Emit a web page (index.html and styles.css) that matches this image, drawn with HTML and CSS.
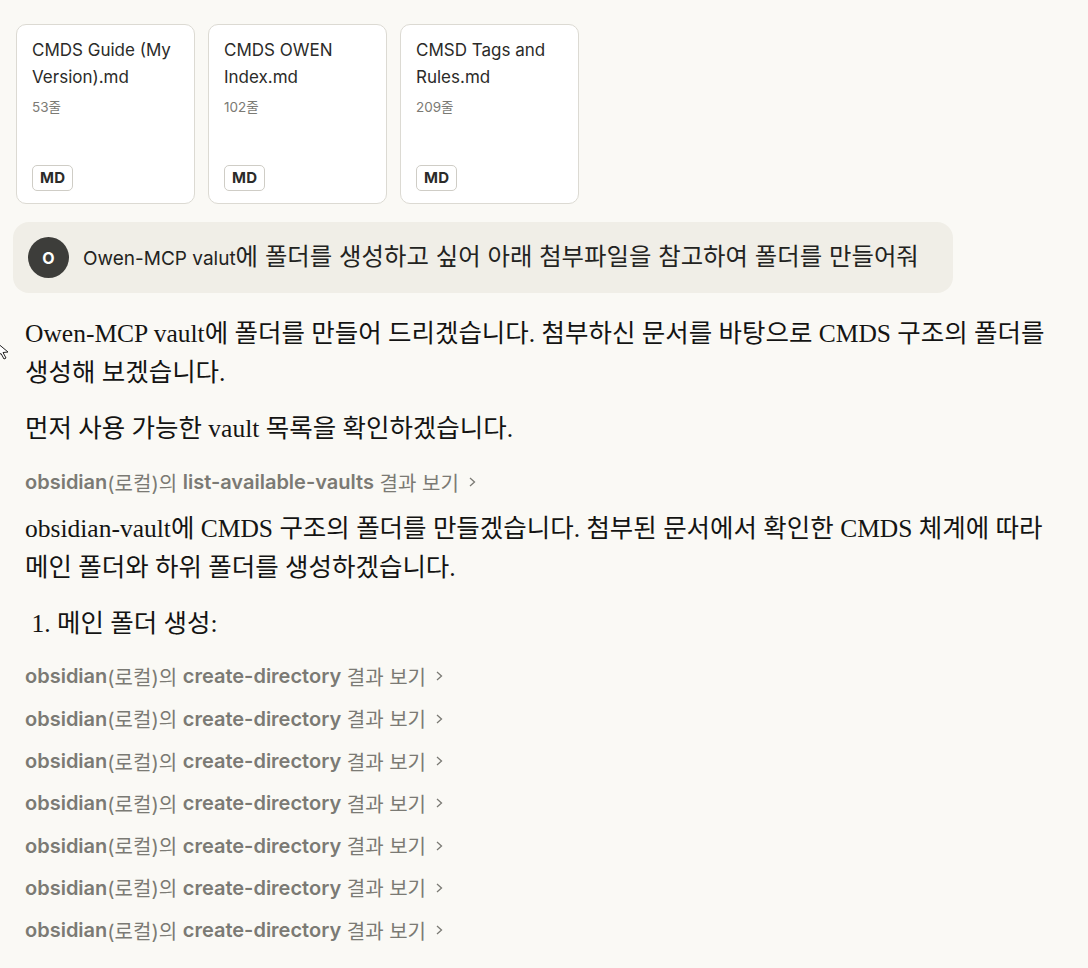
FILE: index.html
```html
<!DOCTYPE html>
<html lang="ko">
<head>
<meta charset="utf-8">
<link rel="stylesheet" href="styles.css">
</head>
<body>
<div class="page">
  <div class="files">
    <div class="card">
      <div class="card-title">CMDS Guide (My Version).md</div>
      <div class="card-meta">53줄</div>
      <div class="badge">MD</div>
    </div>
    <div class="card">
      <div class="card-title">CMDS OWEN Index.md</div>
      <div class="card-meta">102줄</div>
      <div class="badge">MD</div>
    </div>
    <div class="card">
      <div class="card-title">CMSD Tags and Rules.md</div>
      <div class="card-meta">209줄</div>
      <div class="badge">MD</div>
    </div>
  </div>

  <div class="user-msg">
    <div class="avatar">O</div>
    <div class="user-text">Owen-MCP valut<span class="ko">에 폴더를 생성하고 싶어 아래 첨부파일을 참고하여 폴더를 만들어줘</span></div>
  </div>

  <div class="reply">
    <svg class="cursor" width="12" height="20" viewBox="0 0 12 20"><path d="M-4 2 L8 12 L3 12.5 L6 18 L4 19 L1 13.5 L-3 16 Z" fill="#fff" stroke="#222" stroke-width="1"/></svg>
    <p class="para p1">Owen-MCP vault에 폴더를 만들어 드리겠습니다. 첨부하신 문서를 바탕으로 CMDS 구조의 폴더를 생성해 보겠습니다.</p>
    <p class="para p2">먼저 사용 가능한 vault 목록을 확인하겠습니다.</p>
    <div class="tool first"><b>obsidian</b>(로컬)의 <b>list-available-vaults</b> 결과 보기<svg class="chev" width="10" height="14" viewBox="0 0 10 14"><path d="M3 3 L7.5 7 L3 11" fill="none" stroke="#7b7a74" stroke-width="1.3"/></svg></div>
    <p class="para p3">obsidian-vault에 CMDS 구조의 폴더를 만들겠습니다. 첨부된 문서에서 확인한 CMDS 체계에 따라 메인 폴더와 하위 폴더를 생성하겠습니다.</p>
    <ol class="steps"><li>메인 폴더 생성:</li></ol>
    <div class="tools">
      <div class="tool"><b>obsidian</b>(로컬)의 <b>create-directory</b> 결과 보기<svg class="chev" width="10" height="14" viewBox="0 0 10 14"><path d="M3 3 L7.5 7 L3 11" fill="none" stroke="#7b7a74" stroke-width="1.3"/></svg></div>
      <div class="tool"><b>obsidian</b>(로컬)의 <b>create-directory</b> 결과 보기<svg class="chev" width="10" height="14" viewBox="0 0 10 14"><path d="M3 3 L7.5 7 L3 11" fill="none" stroke="#7b7a74" stroke-width="1.3"/></svg></div>
      <div class="tool"><b>obsidian</b>(로컬)의 <b>create-directory</b> 결과 보기<svg class="chev" width="10" height="14" viewBox="0 0 10 14"><path d="M3 3 L7.5 7 L3 11" fill="none" stroke="#7b7a74" stroke-width="1.3"/></svg></div>
      <div class="tool"><b>obsidian</b>(로컬)의 <b>create-directory</b> 결과 보기<svg class="chev" width="10" height="14" viewBox="0 0 10 14"><path d="M3 3 L7.5 7 L3 11" fill="none" stroke="#7b7a74" stroke-width="1.3"/></svg></div>
      <div class="tool"><b>obsidian</b>(로컬)의 <b>create-directory</b> 결과 보기<svg class="chev" width="10" height="14" viewBox="0 0 10 14"><path d="M3 3 L7.5 7 L3 11" fill="none" stroke="#7b7a74" stroke-width="1.3"/></svg></div>
      <div class="tool"><b>obsidian</b>(로컬)의 <b>create-directory</b> 결과 보기<svg class="chev" width="10" height="14" viewBox="0 0 10 14"><path d="M3 3 L7.5 7 L3 11" fill="none" stroke="#7b7a74" stroke-width="1.3"/></svg></div>
      <div class="tool"><b>obsidian</b>(로컬)의 <b>create-directory</b> 결과 보기<svg class="chev" width="10" height="14" viewBox="0 0 10 14"><path d="M3 3 L7.5 7 L3 11" fill="none" stroke="#7b7a74" stroke-width="1.3"/></svg></div>
    </div>
  </div>
</div>
</body>
</html>
```

FILE: styles.css
```css
html, body {
  margin: 0;
  padding: 0;
  background: #faf9f5;
}
body {
  font-family: Inter, "Noto Sans CJK KR", sans-serif;
  color: #141413;
  overflow: hidden;
}
.page {
  padding: 24px 0 0 0;
  width: 1088px;
  height: 968px;
  box-sizing: border-box;
}
.files {
  display: flex;
  gap: 13px;
  padding-left: 16px;
}
.card {
  width: 179px;
  height: 180px;
  box-sizing: border-box;
  background: #ffffff;
  border: 1px solid #dcdad3;
  border-radius: 10px;
  padding: 12px 15px 12px 15px;
  display: flex;
  flex-direction: column;
  align-items: flex-start;
}
.card-title {
  font-size: 17px;
  line-height: 27px;
  color: #2b2b29;
}
.card-meta {
  font-size: 13.5px;
  line-height: 18px;
  margin-top: 7px;
  color: #7b7a74;
}
.badge {
  margin-top: auto;
  box-sizing: border-box;
  height: 26px;
  padding: 0 7px;
  border: 1px solid #cfcdc6;
  border-radius: 5px;
  font-size: 15px;
  font-weight: 700;
  letter-spacing: 0.3px;
  line-height: 24px;
  color: #2b2b29;
  background: #fff;
}
.user-msg {
  margin: 18px 0 0 13px;
  width: 940px;
  height: 71px;
  box-sizing: border-box;
  background: #f0eee7;
  border-radius: 16px;
  display: flex;
  align-items: center;
  gap: 14px;
  padding-left: 15px;
}
.avatar {
  width: 41px;
  height: 41px;
  border-radius: 50%;
  background: #3d3d3a;
  color: #fff;
  font-weight: 700;
  font-size: 16px;
  display: flex;
  align-items: center;
  justify-content: center;
}
.user-text {
  font-size: 19px;
  line-height: 30px;
  color: #232321;
  white-space: nowrap;
}
.ko {
  font-size: 24.4px;
}
.reply {
  position: relative;
  padding-left: 25px;
  width: 1022px;
}
.cursor {
  position: absolute;
  left: 0;
  top: 26px;
}
.para {
  font-family: "Liberation Serif", "Noto Sans CJK KR", serif;
  font-size: 25.5px;
  line-height: 39px;
  margin: 0;
  color: #141413;
}
.p1 { margin-top: 21px; }
.p2 { margin-top: 17px; }
.p3 { margin-top: 6px; }
.steps {
  font-family: "Liberation Serif", "Noto Sans CJK KR", serif;
  font-size: 25.5px;
  line-height: 39px;
  margin: 17px 0 0 0;
  padding-left: 32px;
}
.tool {
  height: 42.3px;
  display: flex;
  align-items: center;
  font-size: 20px;
  color: #7b7a74;
  white-space: pre;
}
.tool b {
  font-weight: 600;
}
.tool.first {
  margin-top: 13px;
}
.tools {
  margin-top: 12px;
}
.chev {
  margin-left: 8px;
}
```
